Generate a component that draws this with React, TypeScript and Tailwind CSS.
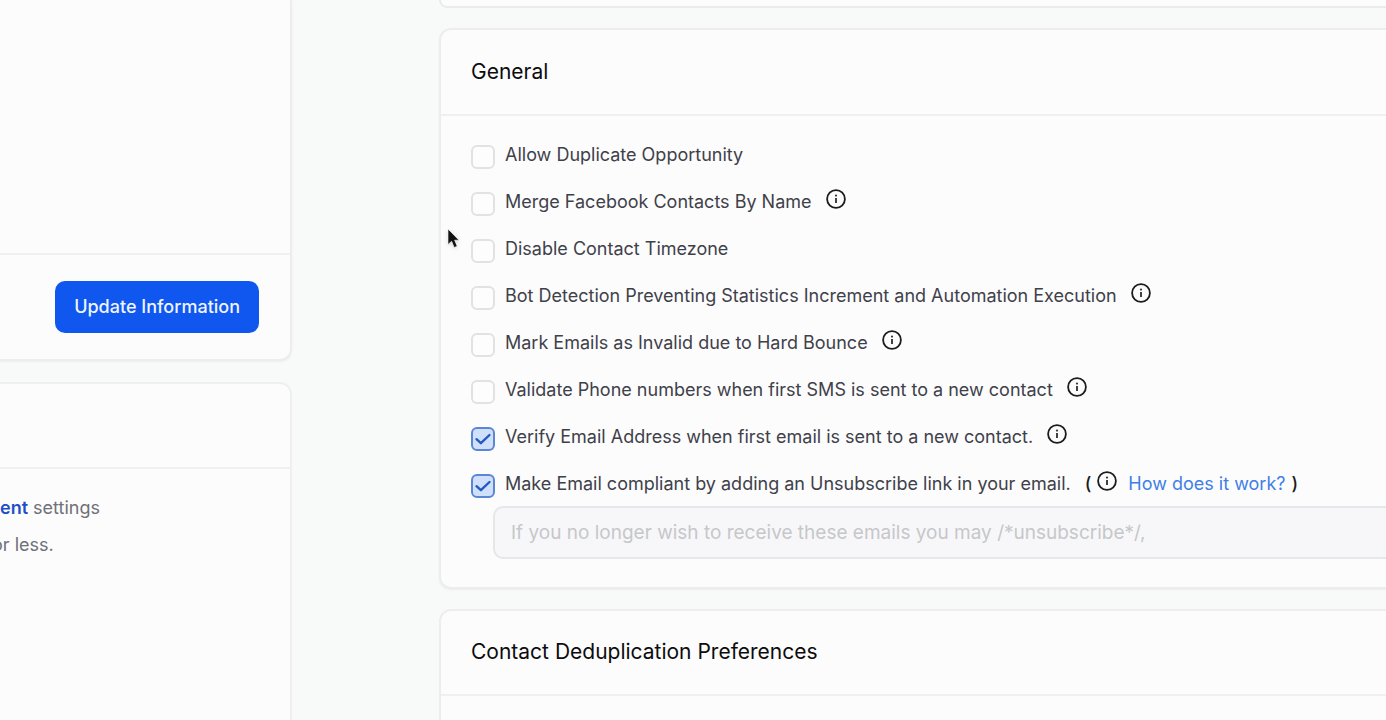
import { useState } from "react";

const initialOptions = [
  { id: "duplicate", label: "Allow Duplicate Opportunity", info: false, checked: false },
  { id: "merge", label: "Merge Facebook Contacts By Name", info: true, checked: false },
  { id: "timezone", label: "Disable Contact Timezone", info: false, checked: false },
  {
    id: "bot",
    label: "Bot Detection Preventing Statistics Increment and Automation Execution",
    info: true,
    checked: false,
  },
  { id: "bounce", label: "Mark Emails as Invalid due to Hard Bounce", info: true, checked: false },
  {
    id: "phone",
    label: "Validate Phone numbers when first SMS is sent to a new contact",
    info: true,
    checked: false,
  },
  {
    id: "verify",
    label: "Verify Email Address when first email is sent to a new contact.",
    info: true,
    checked: true,
  },
  {
    id: "unsubscribe",
    label: "Make Email compliant by adding an Unsubscribe link in your email.",
    info: false,
    checked: true,
  },
];

function InfoIcon() {
  return (
    <svg viewBox="0 0 20 20" className="mb-1.5 size-5 shrink-0" fill="none" aria-hidden="true">
      <circle cx="10" cy="10" r="8.9" stroke="#1c1c1e" strokeWidth="1.8" />
      <circle cx="10" cy="6.6" r="1.1" fill="#3a3a3c" />
      <path d="M10 9v5" stroke="#2c2c2e" strokeWidth="1.8" />
    </svg>
  );
}

function Cursor() {
  return (
    <svg
      viewBox="0 0 14 22"
      className="pointer-events-none absolute top-[228px] left-[447px] h-[22px] w-[14px] drop-shadow"
      aria-hidden="true"
    >
      <path
        d="M1 1v15.5l3.6-3.2 2.6 6.2 3-1.3-2.6-6H12z"
        fill="#111"
        stroke="#fff"
        strokeWidth="0.6"
      />
    </svg>
  );
}

export default function App() {
  const [options, setOptions] = useState(initialOptions);

  const toggle = (id: string) =>
    setOptions(options.map((o) => (o.id === id ? { ...o, checked: !o.checked } : o)));

  return (
    <main className="relative flex h-screen gap-[147px] overflow-hidden bg-[#f8faf9] font-[Inter,sans-serif] text-lg">
      {/* Left column */}
      <div className="flex w-[292px] shrink-0 flex-col gap-[21px]">
        <section className="rounded-br-xl border-r-2 border-b-2 border-[#ededed] bg-[#fcfcfc] shadow-xs">
          <div className="h-[253px]" />
          <div className="flex justify-end border-t-2 border-[#f0f0f0] px-[31px] py-[26px]">
            <button
              type="button"
              className="h-[52px] rounded-[10px] bg-[#0f57ef] px-[19px] font-medium whitespace-nowrap text-[#eef4ff]"
            >
              Update Information
            </button>
          </div>
        </section>

        <section className="grow rounded-tr-xl border-t-2 border-r-2 border-[#efefef] bg-[#fcfcfc]">
          <div className="h-[85px] border-b-2 border-[#f0f0f0]" />
          <div className="pt-5 leading-[37px] text-[#6f7178]">
            <p>
              <a href="#" className="font-semibold text-[#1d50c8]">
                ent
              </a>{" "}
              settings
            </p>
            <p className="-ml-2">or less.</p>
          </div>
        </section>
      </div>

      {/* Right column */}
      <div className="flex min-w-0 grow flex-col gap-5">
        <section className="h-2 shrink-0 rounded-bl-xl border-b-2 border-l-2 border-[#ebebeb] bg-[#fcfcfc]" />

        <section className="rounded-l-xl border-y-2 border-l-2 border-[#ededed] bg-[#fcfcfd] shadow-xs">
          <h2 className="flex h-[86px] items-center border-b-2 border-[#f0f0f0] px-[30px] text-[21px] text-[#0c0c0e]">
            General
          </h2>
          <div className="pt-[15px] pb-7 pl-[30px]">
            {options.map((option) => (
              <div key={option.id} className="flex h-[47px] items-center">
                <span className="mt-1 grid shrink-0">
                  <input
                    id={option.id}
                    type="checkbox"
                    checked={option.checked}
                    onChange={() => toggle(option.id)}
                    className="peer col-start-1 row-start-1 size-6 appearance-none rounded-[6px] border-2 border-[#e2e2e3] bg-[#fdfdfd] checked:border-[#5b86d6] checked:bg-[#d0e0fb]"
                  />
                  <svg
                    viewBox="0 0 24 24"
                    className="pointer-events-none invisible col-start-1 row-start-1 size-6 peer-checked:visible"
                    fill="none"
                    aria-hidden="true"
                  >
                    <path
                      d="M5.5 12.2l4.4 4L18.5 8"
                      stroke="#2459c4"
                      strokeWidth="2.4"
                      strokeLinecap="round"
                      strokeLinejoin="round"
                    />
                  </svg>
                </span>
                <label
                  htmlFor={option.id}
                  className="mr-3.5 ml-2.5 whitespace-nowrap text-[#3f4149]"
                >
                  {option.label}
                </label>
                {option.info && <InfoIcon />}
                {option.id === "unsubscribe" && (
                  <span className="flex items-center whitespace-nowrap text-[#1c1c1e]">
                    <span className="mr-1.5 font-medium">(</span>
                    <InfoIcon />
                    <a href="#" className="mr-1.5 ml-[11px] text-[#3f7fe8]">
                      How does it work?
                    </a>
                    <span className="font-medium">)</span>
                  </span>
                )}
              </div>
            ))}
            <input
              type="text"
              disabled
              aria-label="Unsubscribe text"
              placeholder="If you no longer wish to receive these emails you may /*unsubscribe*/,"
              className="-mt-px ml-[22px] block h-[53px] w-full rounded-[10px] border-2 border-[#e6e7e9] bg-[#f7f7f9] px-4 text-[19px] placeholder:text-[#c6c7ca]"
            />
          </div>
        </section>

        <section className="grow rounded-tl-xl border-t-2 border-l-2 border-[#ededed] bg-[#fcfcfc]">
          <h2 className="flex h-[85px] items-center border-b-2 border-[#f0f0f0] px-[30px] text-[21px] text-[#0c0c0e]">
            Contact Deduplication Preferences
          </h2>
        </section>
      </div>

      <Cursor />
    </main>
  );
}
